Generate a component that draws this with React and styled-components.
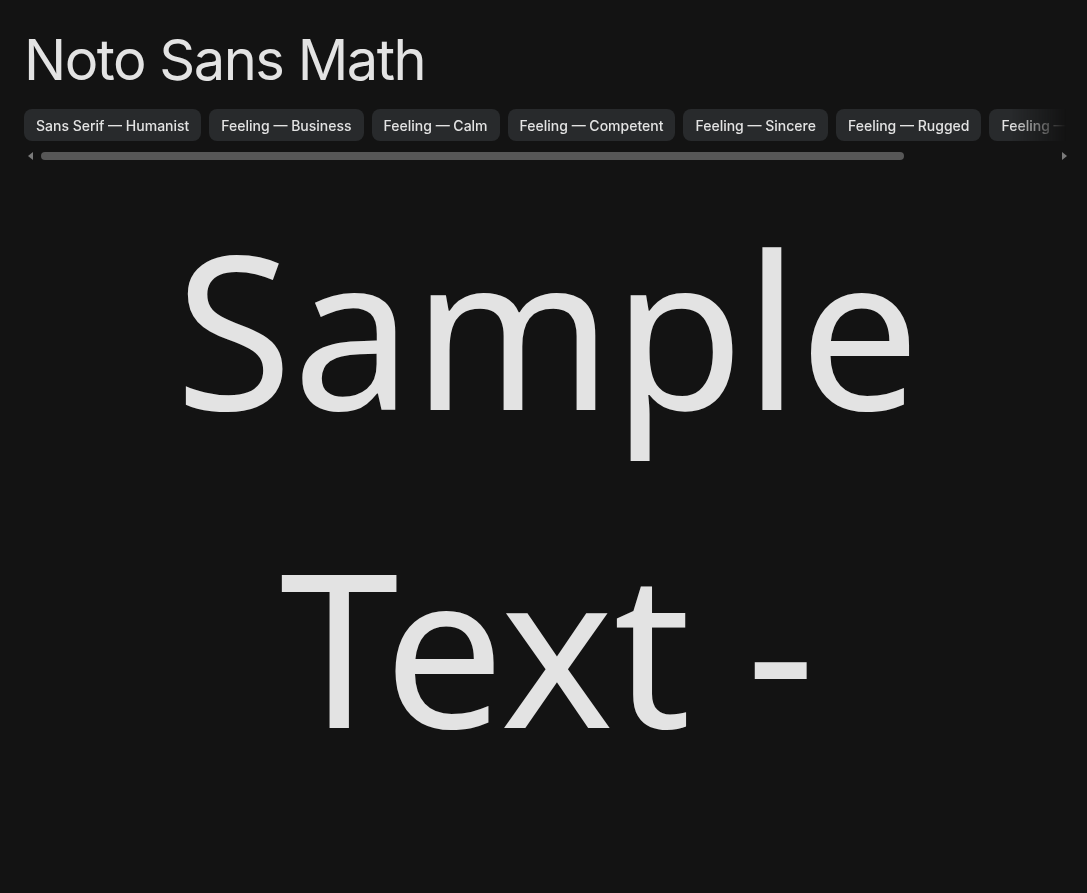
import styled, { createGlobalStyle } from 'styled-components';

const GlobalStyle = createGlobalStyle`
  html, body {
    margin: 0;
    padding: 0;
    background: #131313;
    overflow: hidden;
  }
  body {
    font-family: Inter, "Noto Sans", sans-serif;
    color: #e3e3e3;
  }
`;

const Page = styled.div`
  height: 893px;
  overflow: hidden;
  padding: 0 16px 0 24px;
`;

const Title = styled.h1`
  margin: 0;
  padding-top: 28px;
  font-family: Inter, "Noto Sans", sans-serif;
  font-weight: 400;
  font-size: 56px;
  line-height: 64px;
  letter-spacing: -1.5px;
  color: #e3e3e3;
`;

const ChipStrip = styled.div`
  display: flex;
  gap: 8px;
  margin-top: 17px;
  overflow: hidden;
  white-space: nowrap;
  mask-image: linear-gradient(to right, #000 calc(100% - 60px), transparent calc(100% - 5px));
`;

const Chip = styled.span`
  flex: none;
  display: inline-flex;
  align-items: center;
  height: 32px;
  padding: 0 12px;
  border-radius: 8px;
  background: #282a2c;
  font-size: 14px;
  font-weight: 500;
  color: #e3e3e3;
`;

const Scrollbar = styled.div`
  display: flex;
  align-items: center;
  height: 12px;
  margin-top: 9px;
`;

const Arrow = styled.span`
  flex: none;
  width: 0;
  height: 0;
  border-top: 4px solid transparent;
  border-bottom: 4px solid transparent;
  ${(p) =>
    p.$dir === 'left'
      ? 'border-right: 5px solid #7a7a7a; margin: 0 8px 0 4px;'
      : 'border-left: 5px solid #7a7a7a; margin: 0 4px 0 8px;'}
`;

const Track = styled.div`
  flex: 1;
  height: 8px;
  display: flex;
`;

const Thumb = styled.div`
  width: ${(p) => p.$width};
  height: 8px;
  border-radius: 4px;
  background: #575757;
`;

const Sample = styled.p`
  margin: 6px 0 0;
  padding: 0 32px;
  text-align: center;
  font-family: "Noto Sans", "Open Sans", sans-serif;
  font-size: 214px;
  line-height: 318px;
  color: #e3e3e3;
`;

const chips = [
  'Sans Serif — Humanist',
  'Feeling — Business',
  'Feeling — Calm',
  'Feeling — Competent',
  'Feeling — Sincere',
  'Feeling — Rugged',
  'Feeling — Innovative',
  'Feeling — Stiff',
];

export default function App() {
  return (
    <>
      <GlobalStyle />
      <Page>
        <Title>Noto Sans Math</Title>
        <ChipStrip>
          {chips.map((c) => (
            <Chip key={c}>{c}</Chip>
          ))}
        </ChipStrip>
        <Scrollbar>
          <Arrow $dir="left" />
          <Track>
            <Thumb $width="863px" />
          </Track>
          <Arrow $dir="right" />
        </Scrollbar>
        <Sample>Sample Text - Noto Sans Math</Sample>
      </Page>
    </>
  );
}
